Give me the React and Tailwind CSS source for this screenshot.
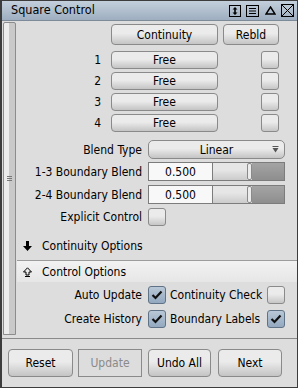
import React from "react";

const FONT = "font-['DejaVu_Sans_Condensed','DejaVu_Sans',sans-serif] [font-stretch:condensed]";

const BTN =
  "flex items-center justify-center rounded-[4px] border border-[#8a8a8a] bg-[linear-gradient(to_bottom,#ebebeb_45%,#c4c4c4)] text-[12px] text-black";

const Check = ({ checked }) => (
  <div
    className={
      "flex h-[18px] w-[18px] shrink-0 items-center justify-center rounded-[3px] border " +
      (checked
        ? "border-[#5f7286] bg-[linear-gradient(to_bottom,#b9c8d8,#93a8bf)]"
        : "border-[#8a8a8a] bg-[linear-gradient(to_bottom,#ebebeb_45%,#c6c6c6)]")
    }
  >
    {checked && (
      <svg width="12" height="10" viewBox="0 0 12 10">
        <path d="M1.5 5 L4.5 8 L10.5 1.5" fill="none" stroke="#111" strokeWidth="2.2" />
      </svg>
    )}
  </div>
);

const SliderField = () => (
  <div className="flex h-[19px] w-[137px] border border-[#7c7c7c]">
    <div className="flex w-[64px] items-center justify-center border-r border-[#7c7c7c] bg-[#f8f8f8] text-[12px]">
      0.500
    </div>
    <div className="flex flex-1">
      <div className="w-[34px] bg-[linear-gradient(to_bottom,#e6e6e6_40%,#cbcbcb)]" />
      <div className="w-[5px] rounded-[2px] border border-[#8a8a8a] bg-[#ececec]" />
      <div className="flex-1 bg-[linear-gradient(to_bottom,#a4a4a4,#8e8e8e)]" />
    </div>
  </div>
);

const FreeRow = ({ n }) => (
  <div className="flex h-[18px] items-center">
    <div className="w-[84px] text-right text-[12px]">{n}</div>
    <div className={BTN + " ml-[10px] h-[18px] w-[107px]"}>Free</div>
    <div className="ml-[43px]">
      <Check />
    </div>
  </div>
);

export default function App() {
  return (
    <div className={FONT + " w-[298px] h-[388px] flex flex-col border border-l-2 border-[#3c3c3c] bg-[#dddddd] text-black"}>
      {/* title bar */}
      <div className="flex h-[20px] shrink-0 items-center border-b border-[#7d8a98] bg-[linear-gradient(to_bottom,#c3cfdb,#9eaec0)] pl-[9px] pr-[3px]">
        <span className="text-[12.5px]">Square Control</span>
        <div className="ml-auto flex items-center">
          <svg width="12" height="12" viewBox="0 0 12 12" className="mr-[5px]">
            <rect x="0.5" y="0.5" width="11" height="11" fill="none" stroke="#000" />
            <path d="M6 2 L8.5 4.5 L3.5 4.5 Z M6 10 L8.5 7.5 L3.5 7.5 Z" fill="#000" />
            <rect x="5.2" y="4" width="1.6" height="4" fill="#000" />
          </svg>
          <svg width="13" height="12" viewBox="0 0 13 12" className="mr-[6px]">
            <rect x="0.5" y="0.5" width="12" height="11" fill="none" stroke="#000" />
            <path d="M3 3.5 H10 M3 6 H10 M3 8.5 H10" stroke="#000" strokeWidth="1" />
          </svg>
          <svg width="11" height="9" viewBox="0 0 11 9" className="mr-[5px]">
            <path d="M5.5 1 L10 8 L1 8 Z" fill="none" stroke="#000" strokeWidth="1.4" />
          </svg>
          <svg width="13" height="13" viewBox="0 0 13 13">
            <rect x="0.5" y="0.5" width="12" height="12" fill="none" stroke="#000" />
            <path d="M1 1 L12 12 M12 1 L1 12" stroke="#000" strokeWidth="1" />
          </svg>
        </div>
      </div>

      {/* body */}
      <div className="flex h-[318px] shrink-0 border-b border-[#8a8a8a]">
        <div className="w-[15px] shrink-0 pl-[1px] pt-[1px] pb-[3px]">
          <div className="flex h-full w-[13px] items-center justify-center rounded-t-[2px] border border-[#8c8c8c] bg-[linear-gradient(to_right,#ececec_45%,#c9c9c9_50%)]">
            <svg width="5" height="6" viewBox="0 0 5 6">
              <path d="M0 0.5 H5 M0 2.5 H5 M0 4.5 H5" stroke="#777" strokeWidth="1" />
            </svg>
          </div>
        </div>

        <div className="flex flex-1 flex-col pt-[3px] text-[12px]">
          <div className="flex h-[21px]">
            <div className={BTN + " ml-[94px] w-[107px]"}>Continuity</div>
            <div className={BTN + " ml-[5px] w-[56px]"}>Rebld</div>
          </div>

          <div className="mt-[6px] flex flex-col gap-[3px]">
            <FreeRow n="1" />
            <FreeRow n="2" />
            <FreeRow n="3" />
            <FreeRow n="4" />
          </div>

          <div className="mt-[8px] flex h-[19px] items-center">
            <div className="w-[125px] text-right">Blend Type</div>
            <div className={BTN + " relative ml-[6px] h-[19px] w-[137px] rounded-[5px]"}>
              Linear
              <svg width="7" height="7" viewBox="0 0 7 7" className="absolute right-[5px] top-[5px]">
                <path d="M0.5 0.5 H6.5" stroke="#555" />
                <path d="M0.5 2 L6.5 2 L3.5 6.5 Z" fill="#555" />
              </svg>
            </div>
          </div>

          <div className="mt-[3px] flex h-[19px] items-center">
            <div className="w-[125px] text-right">1-3 Boundary Blend</div>
            <div className="ml-[6px]">
              <SliderField />
            </div>
          </div>

          <div className="mt-[4px] flex h-[19px] items-center">
            <div className="w-[125px] text-right">2-4 Boundary Blend</div>
            <div className="ml-[6px]">
              <SliderField />
            </div>
          </div>

          <div className="mt-[4px] flex h-[18px] items-center">
            <div className="w-[125px] text-right">Explicit Control</div>
            <div className="ml-[6px]">
              <Check />
            </div>
          </div>

          <div className="mt-[7px] flex h-[25px] items-center pl-[6px]">
            <svg width="9" height="10" viewBox="0 0 9 10">
              <path d="M3 0 H6 V5 H9 L4.5 10 L0 5 H3 Z" fill="#000" />
            </svg>
            <span className="ml-[10px]">Continuity Options</span>
          </div>

          <div className="mt-[2px] flex h-[22px] items-center border-t border-[#9c9c9c] bg-[linear-gradient(to_bottom,#f2f2f2,#e6e6e6)] pl-[6px]">
            <svg width="9" height="10" viewBox="0 0 9 10">
              <path d="M3 8 V5 H0.5 L4.5 0.8 L8.5 5 H6 V8 Z" fill="none" stroke="#000" strokeWidth="1" />
              <path d="M2 9.5 H7" stroke="#000" strokeWidth="1" />
            </svg>
            <span className="ml-[10px]">Control Options</span>
          </div>

          <div className="mt-[4px] flex h-[18px] items-center">
            <div className="w-[125px] text-right">Auto Update</div>
            <div className="ml-[6px]">
              <Check checked />
            </div>
            <div className="ml-[4px] w-[93px] text-left">Continuity Check</div>
            <div className="ml-[4px]">
              <Check />
            </div>
          </div>

          <div className="mt-[6px] flex h-[18px] items-center">
            <div className="w-[125px] text-right">Create History</div>
            <div className="ml-[6px]">
              <Check checked />
            </div>
            <div className="ml-[4px] w-[93px] text-left">Boundary Labels</div>
            <div className="ml-[4px]">
              <Check checked />
            </div>
          </div>
        </div>
      </div>

      {/* bottom buttons */}
      <div className="flex pl-[6px] pt-[10px]">
        <div className={BTN + " h-[28px] w-[65px]"}>Reset</div>
        <div className="ml-[5px] flex h-[28px] w-[64px] items-center justify-center border border-[#8a8a8a] text-[12px] text-[#8a8a8a]">
          Update
        </div>
        <div className={BTN + " ml-[6px] h-[28px] w-[63px]"}>Undo All</div>
        <div className={BTN + " ml-[7px] h-[28px] w-[64px]"}>Next</div>
      </div>
    </div>
  );
}
